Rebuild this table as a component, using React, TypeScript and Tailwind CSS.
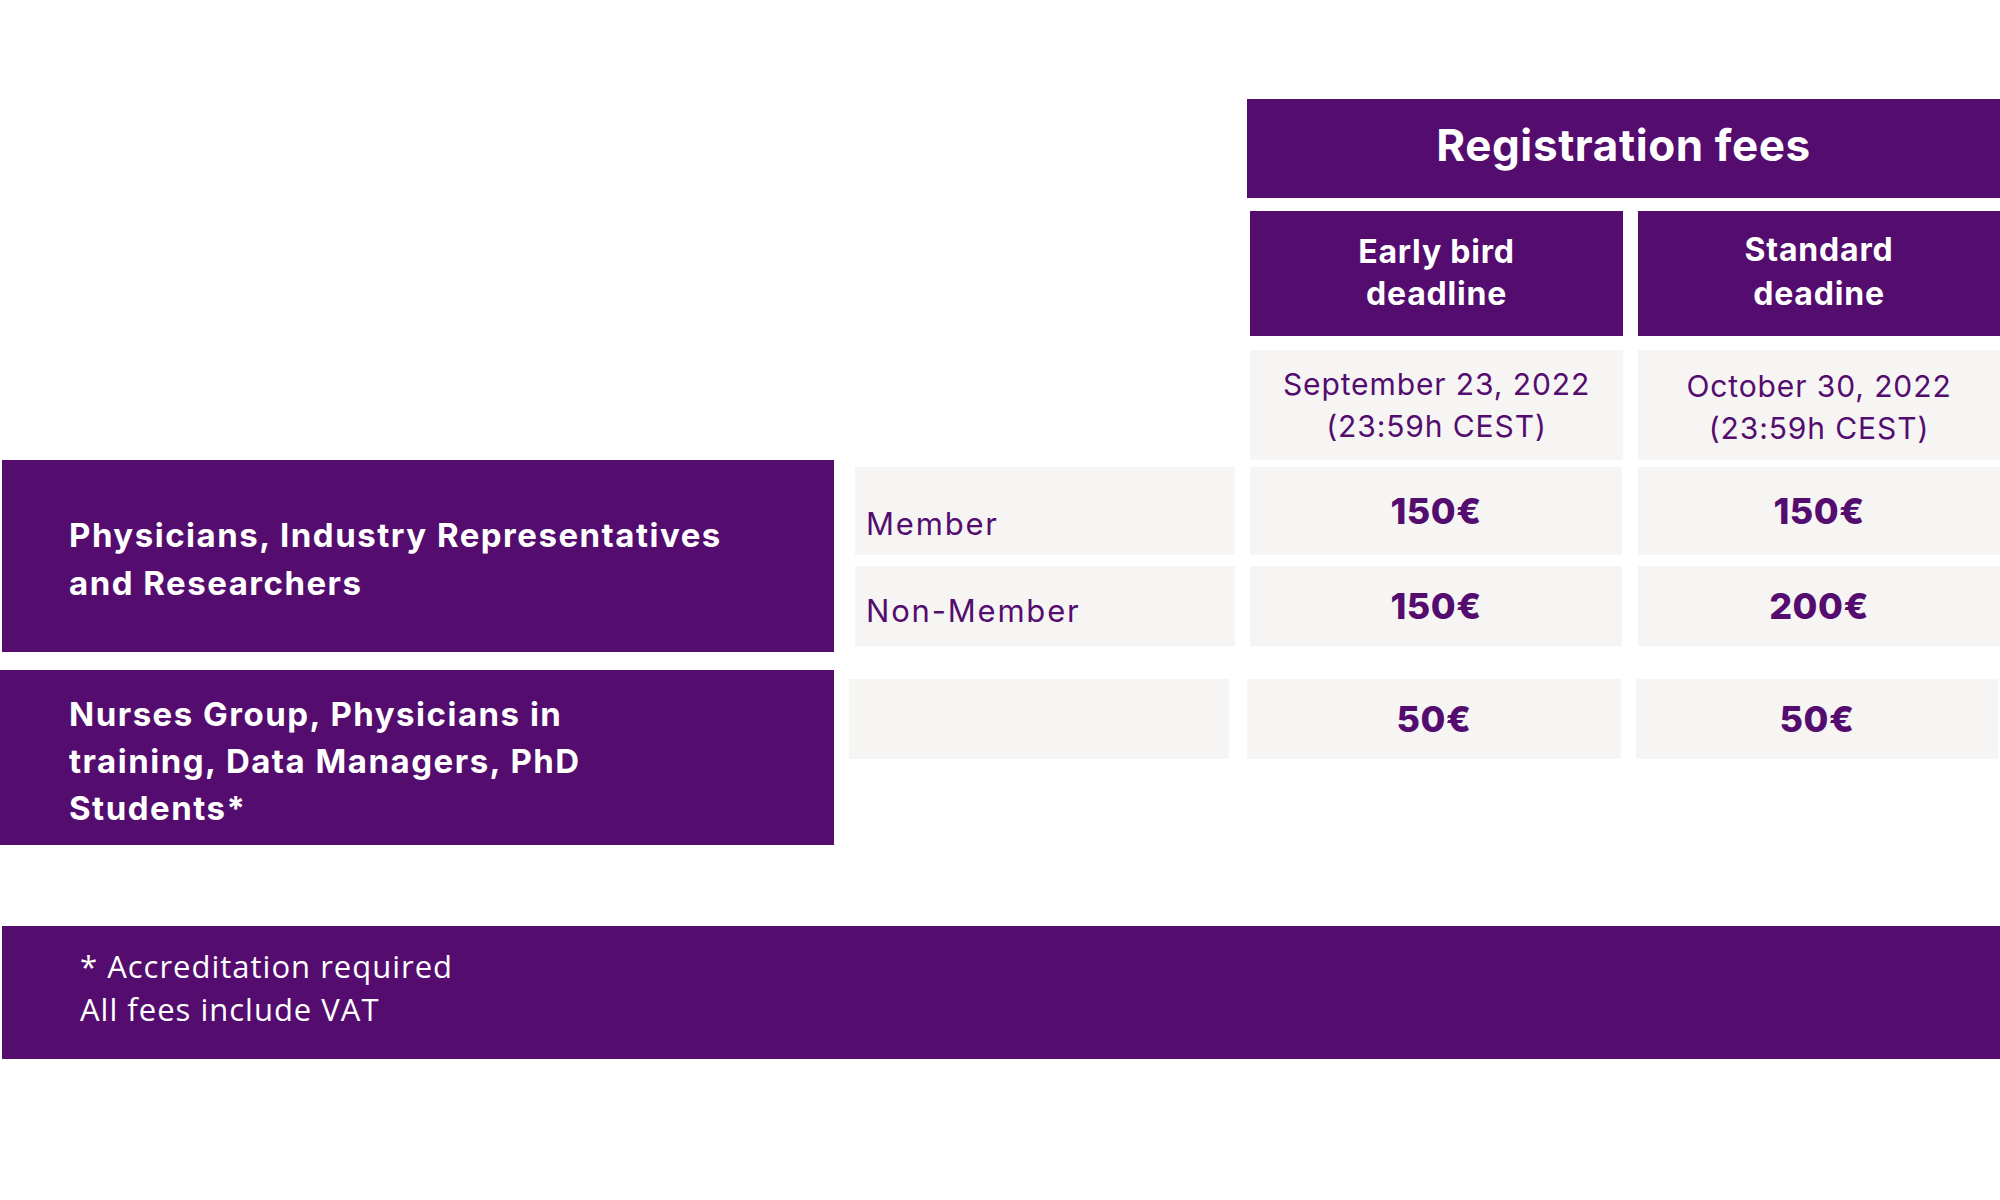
const purple = "bg-[#540d6e]";

function PriceCell({ value, className }: { value: string; className: string }) {
  return (
    <div className={`flex items-center justify-center bg-[#f6f5f4] text-[36px] font-extrabold tracking-[0.5px] text-[#540d6e] ${className}`}>
      {value}
    </div>
  );
}

export default function App() {
  return (
    <div className="w-[2000px] h-[1200px] overflow-hidden bg-white pt-[99px] font-['Inter',sans-serif]">
      {/* Column headers */}
      <div className={`ml-[1247px] flex h-[99px] w-[753px] items-center justify-center ${purple} pb-[7px] text-[44px] font-bold tracking-[0.6px] text-white`}>
        Registration fees
      </div>
      <div className="mt-[13px] ml-[1250px] flex gap-[15px]">
        <div className={`flex h-[125px] w-[373px] items-center justify-center ${purple} pb-[2px] text-center text-[32px] font-bold leading-[42px] tracking-[0.8px] text-white`}>
          Early bird
          <br />
          deadline
        </div>
        <div className={`flex h-[125px] w-[362px] items-center justify-center ${purple} pb-[4px] text-center text-[32px] font-bold leading-[44px] tracking-[0.8px] text-white`}>
          Standard
          <br />
          deadine
        </div>
      </div>
      <div className="mt-[14px] ml-[1250px] flex gap-[15px] text-center text-[30px] leading-[42px] tracking-[0.9px] text-[#540d6e]">
        <div className="flex h-[110px] w-[373px] items-center justify-center bg-[#f6f5f4]">
          September 23, 2022
          <br />
          (23:59h CEST)
        </div>
        <div className="flex h-[110px] w-[362px] items-center justify-center bg-[#f6f5f4] pt-[4px]">
          October 30, 2022
          <br />
          (23:59h CEST)
        </div>
      </div>

      {/* Physicians rows */}
      <div className="flex">
        <div className={`ml-[2px] flex h-[192px] w-[832px] items-center ${purple} pl-[67px] pt-[6px] text-[33px] font-bold leading-[48px] tracking-[1.5px] text-white`}>
          Physicians, Industry Representatives
          <br />
          and Researchers
        </div>
        <div className="ml-[21px] flex flex-col gap-[11px] pt-[7px]">
          <div className="flex gap-[15px]">
            <div className="flex h-[88px] w-[380px] items-end bg-[#f6f5f4] pb-[13px] pl-[11px] text-[31px] leading-[36px] tracking-[1.8px] text-[#540d6e]">
              Member
            </div>
            <PriceCell value="150€" className="h-[88px] w-[372px]" />
            <PriceCell value="150€" className="ml-[1px] h-[88px] w-[362px]" />
          </div>
          <div className="flex gap-[15px]">
            <div className="flex h-[80px] w-[380px] items-end bg-[#f6f5f4] pb-[17px] pl-[11px] text-[31px] leading-[36px] tracking-[1.8px] text-[#540d6e]">
              Non-Member
            </div>
            <PriceCell value="150€" className="h-[80px] w-[372px]" />
            <PriceCell value="200€" className="ml-[1px] h-[80px] w-[362px]" />
          </div>
        </div>
      </div>

      {/* Nurses row */}
      <div className="mt-[18px] flex">
        <div className={`flex h-[175px] w-[834px] items-center ${purple} pl-[69px] pt-[8px] text-[33px] font-bold leading-[47px] tracking-[1.5px] text-white`}>
          Nurses Group, Physicians in
          <br />
          training, Data Managers, PhD
          <br />
          Students*
        </div>
        <div className="ml-[15px] flex gap-[18px] pt-[9px]">
          <div className="h-[80px] w-[380px] bg-[#f6f5f4]" />
          <PriceCell value="50€" className="h-[80px] w-[374px]" />
          <PriceCell value="50€" className="ml-[-3px] h-[80px] w-[362px]" />
        </div>
      </div>

      {/* Footnote */}
      <div className={`mt-[81px] ml-[2px] flex h-[133px] w-[1998px] items-center ${purple} pb-[10px] pl-[78px] font-['Open_Sans',sans-serif] text-[31px] leading-[43px] tracking-[1px] text-white`}>
        <div>
          * Accreditation required
          <br />
          All fees include VAT
        </div>
      </div>
    </div>
  );
}
